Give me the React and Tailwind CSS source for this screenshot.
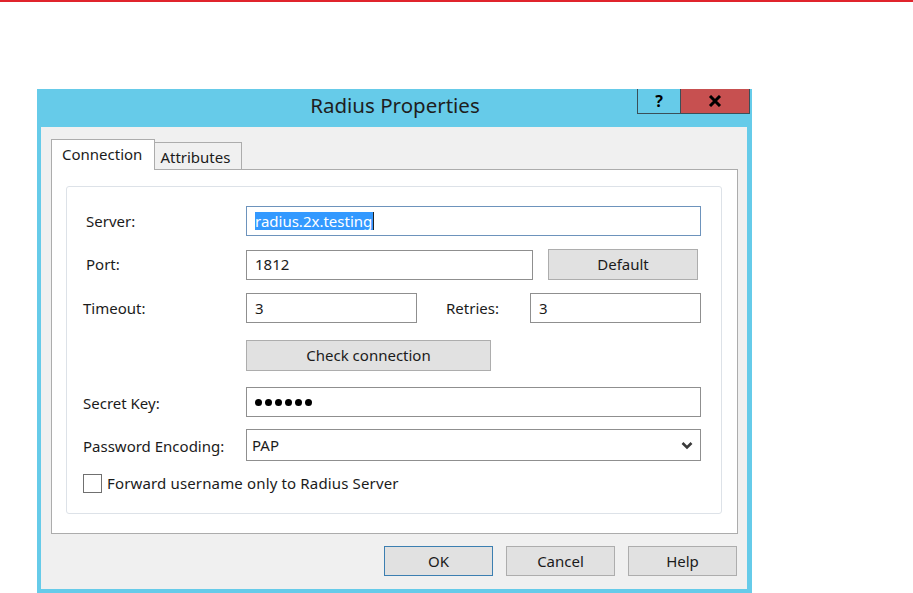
import React from "react";

function Btn({ children, className = "", primary = false }) {
  return (
    <div
      className={
        "flex items-center justify-center h-[30px] bg-[#e1e1e1] border text-[#1b1b1b] " +
        (primary ? "border-[#3c7fb1] " : "border-[#adadad] ") +
        className
      }
    >
      {children}
    </div>
  );
}

function Field({ children, className = "", focused = false }) {
  return (
    <div
      className={
        "flex items-center h-[30px] bg-white border px-[8px] text-[#1b1b1b] " +
        (focused ? "border-[#6d93bc] " : "border-[#8f8f8f] ") +
        className
      }
    >
      {children}
    </div>
  );
}

export default function App() {
  return (
    <div className="w-[913px] h-[593px] overflow-hidden bg-white font-['Noto_Sans',sans-serif] text-[15px] text-[#1b1b1b]">
      <div className="h-[2px] bg-[#e0242c]" />
      <div className="ml-[37px] mt-[87px] w-[715px] h-[504px] bg-[#66cbe9] pl-[4px] pr-[5px] pb-[4px] flex flex-col">
        {/* title bar */}
        <div className="relative h-[38px] shrink-0">
          <div className="text-center text-[20.5px] leading-[28px] pt-[2px] pl-[2px] text-[#1e1e1e]">
            Radius Properties
          </div>
          <div className="absolute top-0 right-[-3px] flex h-[25px]">
            <div className="w-[43px] h-full flex items-center justify-center border-l border-b border-[#3a4f58] text-[16px] font-bold text-black leading-none">
              ?
            </div>
            <div className="w-[70px] h-full flex items-center justify-center bg-[#c75050] border-l border-b border-r border-[#3a4f58]">
              <svg width="14" height="12" viewBox="0 0 14 12">
                <path d="M2 1 L12 11 M12 1 L2 11" stroke="#000" strokeWidth="3" />
              </svg>
            </div>
          </div>
        </div>

        {/* client area */}
        <div className="flex-1 bg-[#f0f0f0] flex flex-col">
          {/* tabs */}
          <div className="h-[42px] flex items-end pl-[10px] shrink-0">
            <div className="relative z-10 h-[31px] mb-[-1px] bg-white border-l border-t border-r border-[#acacac] pl-[10px] pr-[12px] pt-[4px] leading-[20px]">
              Connection
            </div>
            <div className="h-[27px] bg-[#f0f0f0] border-t border-r border-[#acacac] pl-[5px] pr-[11px] pt-[4px] leading-[20px]">
              Attributes
            </div>
          </div>
          {/* tab page */}
          <div className="ml-[10px] w-[687px] h-[365px] bg-white border border-[#acacac] pt-[16px] pl-[14px] shrink-0">
            <div className="w-[656px] h-[328px] border border-[#dde2e8] rounded-[3px] bg-white flex flex-col pt-[19px]">
              {/* Server */}
              <div className="flex items-center">
                <div className="w-[179px] pl-[19px] shrink-0">Server:</div>
                <Field focused className="w-[455px]">
                  <span className="bg-[#3399ff] text-white leading-[18px] pr-[1px]">radius.2x.testing</span>
                  <span className="w-[1px] h-[18px] bg-[#222]" />
                </Field>
              </div>
              {/* Port */}
              <div className="flex items-center mt-[13px]">
                <div className="w-[179px] pl-[19px] shrink-0">Port:</div>
                <Field className="w-[287px]">1812</Field>
                <Btn className="ml-[15px] w-[150px] h-[31px]">Default</Btn>
              </div>
              {/* Timeout / Retries */}
              <div className="flex items-center mt-[13px]">
                <div className="w-[179px] pl-[16px] shrink-0">Timeout:</div>
                <Field className="w-[171px]">3</Field>
                <div className="ml-[29px] w-[84px] shrink-0">Retries:</div>
                <Field className="w-[171px]">3</Field>
              </div>
              {/* Check connection */}
              <div className="flex items-center mt-[17px]">
                <div className="w-[179px] shrink-0" />
                <Btn className="w-[245px] h-[31px]">Check connection</Btn>
              </div>
              {/* Secret key */}
              <div className="flex items-center mt-[16px]">
                <div className="w-[179px] pl-[16px] shrink-0 pt-[3px]">Secret Key:</div>
                <Field className="w-[455px] gap-[3px]">
                  {[0, 1, 2, 3, 4, 5].map((i) => (
                    <span key={i} className="w-[7px] h-[7px] rounded-full bg-black" />
                  ))}
                </Field>
              </div>
              {/* Password encoding */}
              <div className="flex items-center mt-[12px]">
                <div className="w-[179px] pl-[16px] shrink-0 pt-[2px]">Password Encoding:</div>
                <Field className="w-[455px] h-[32px] justify-between pl-[5px] pr-[7px]">
                  <span>PAP</span>
                  <svg width="12" height="9" viewBox="0 0 12 9">
                    <path d="M1.5 2 L6 6.5 L10.5 2" fill="none" stroke="#3a3a3a" strokeWidth="2.6" />
                  </svg>
                </Field>
              </div>
              {/* checkbox */}
              <div className="flex items-center mt-[11px] pl-[16px]">
                <div className="w-[19px] h-[19px] border border-[#707070] bg-white shrink-0" />
                <div className="ml-[5px] tracking-[0.15px]">Forward username only to Radius Server</div>
              </div>
            </div>
          </div>
          {/* bottom buttons */}
          <div className="flex justify-end gap-[13px] pr-[10px] mt-[12px]">
            <Btn primary className="w-[109px]">OK</Btn>
            <Btn className="w-[109px]">Cancel</Btn>
            <Btn className="w-[109px]">Help</Btn>
          </div>
        </div>
      </div>
    </div>
  );
}
